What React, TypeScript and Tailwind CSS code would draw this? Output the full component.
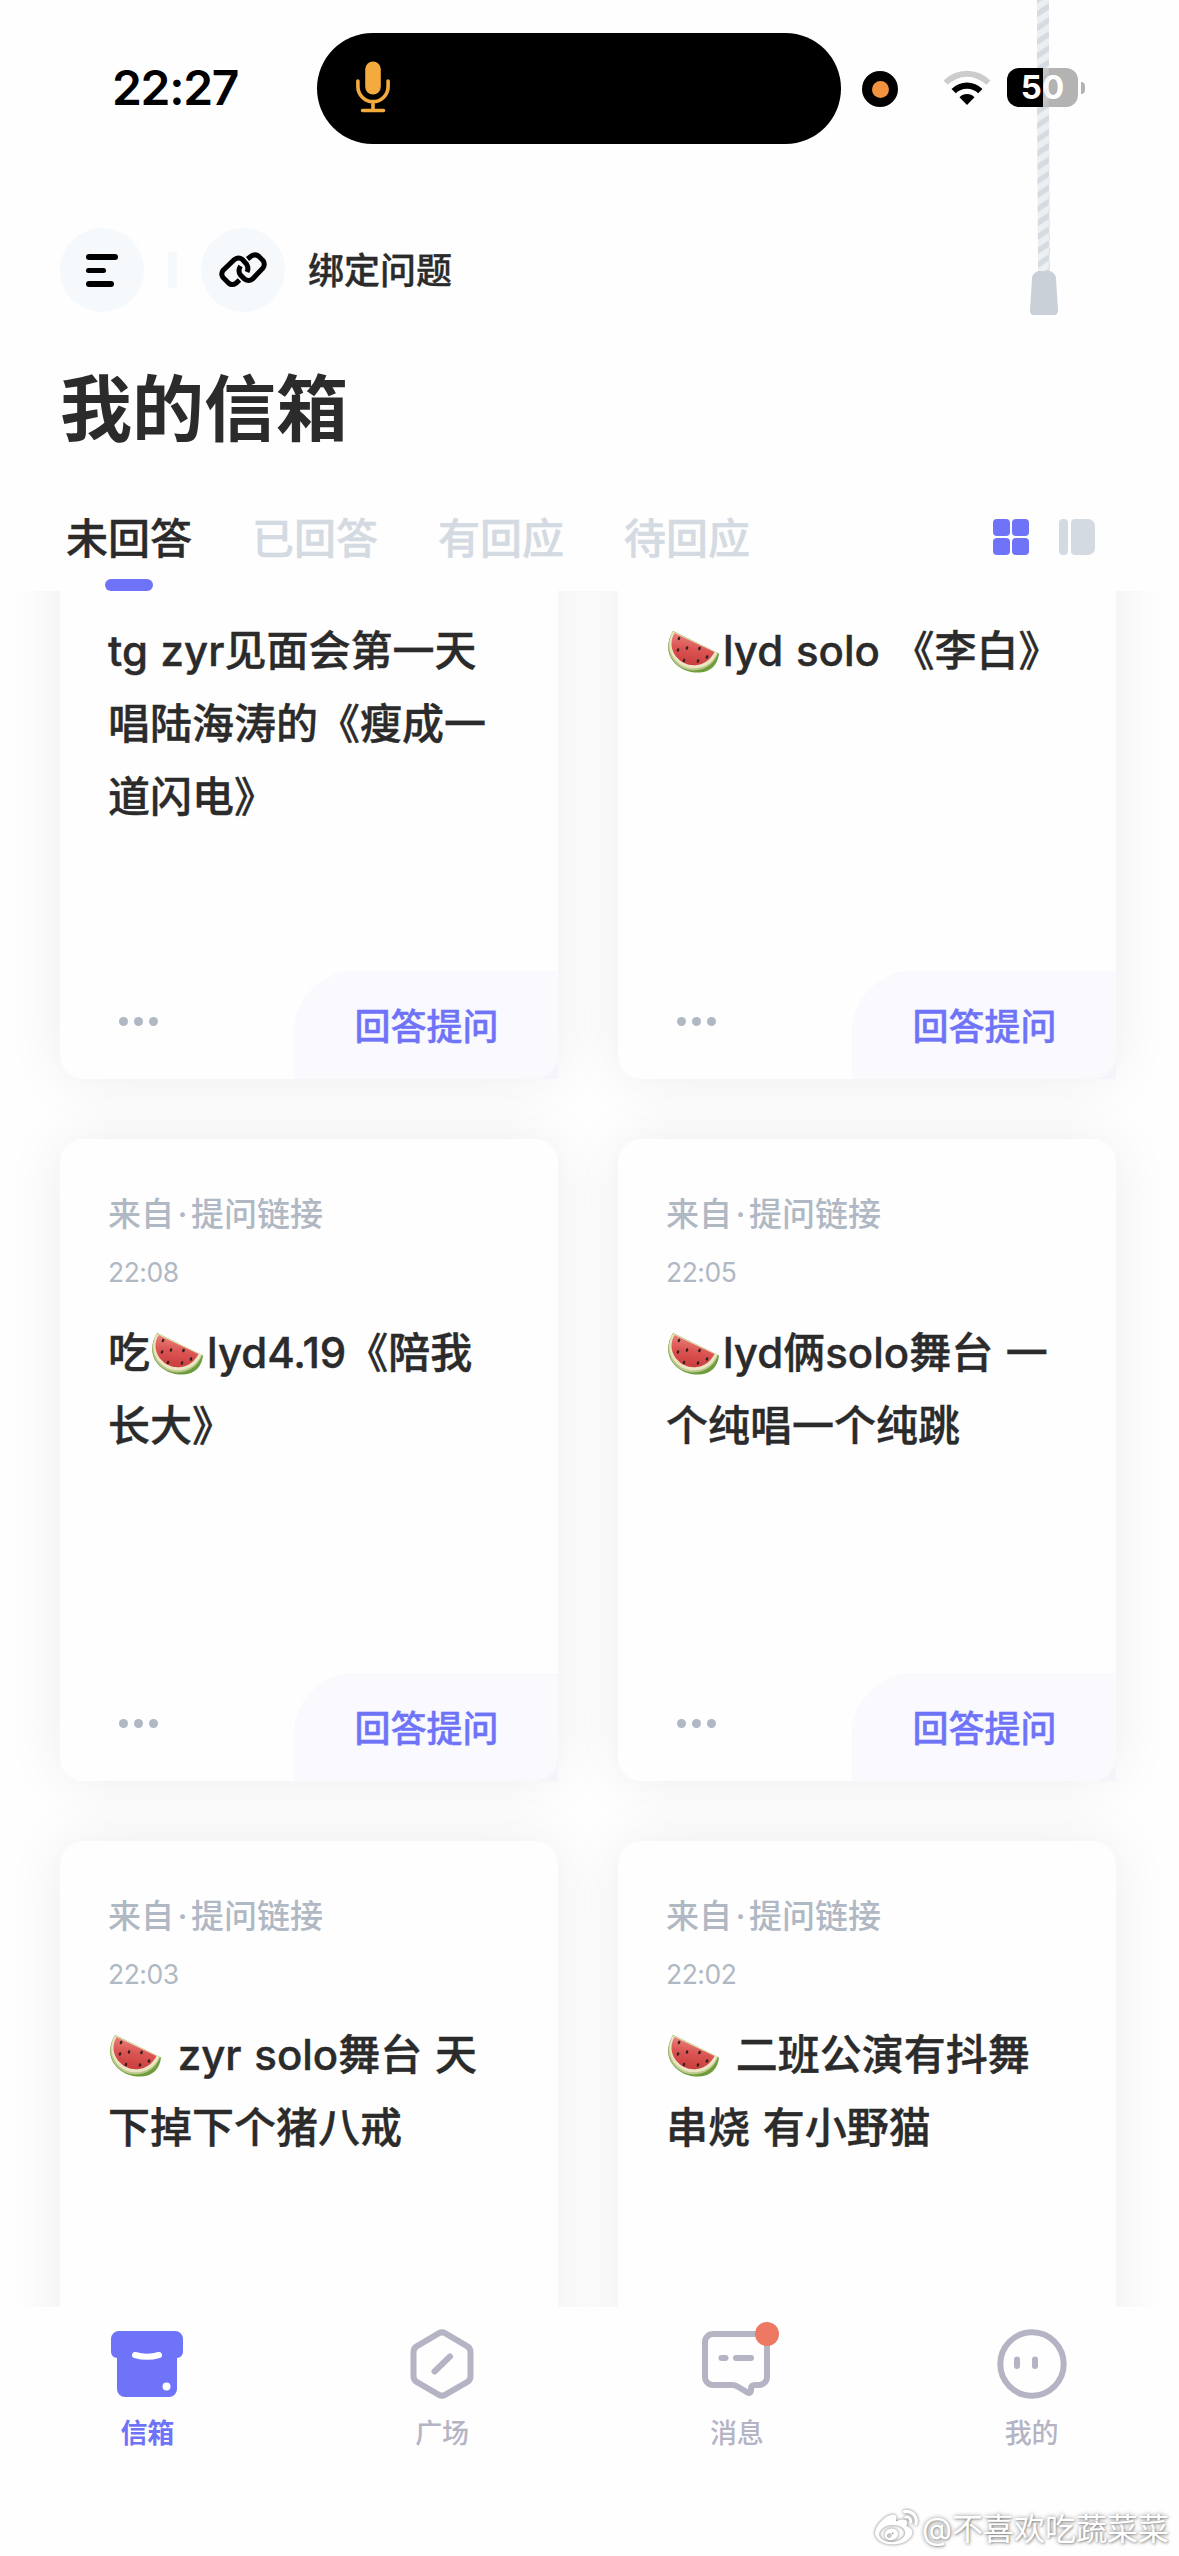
import React from "react";
import { FaWeibo } from "react-icons/fa";

function Watermelon() {
  return (
    <svg viewBox="0 0 51 42" className="mr-[4px] ml-[2px] inline-block h-[42px] w-[51px] align-[-7px]" aria-label="🍉">
      <defs>
        <linearGradient id="flesh" x1="0.6" y1="0" x2="0.4" y2="1">
          <stop offset="0" stopColor="#eb8a80" />
          <stop offset="0.5" stopColor="#db5553" />
          <stop offset="1" stopColor="#c93c3d" />
        </linearGradient>
      </defs>
      <path d="M5 0C-1 10-2 21 5 30c7 9 17 12 27 11.500C42 41 50 34 51 22.500z" fill="#6f9c3c" />
      <path d="M5 0C-1 10-1 20 5 29c7 9 16 11.500 25 10C40 37.500 47 31 50 22z" fill="#b9c98a" />
      <path d="M5 .5C0 10 0 19 6 27.500c6 8 15 11 24 9.500 9-1.500 16-7 19.500-15.500z" fill="#ece5c3" />
      <path d="M6.500 2C2 10 2.500 18 8 25.500c6 7 13 9.500 21 8.500 8-1 14-6 17.500-13z" fill="url(#flesh)" />
      <g fill="#33201f">
        <ellipse cx="11" cy="7.500" rx="1.200" ry="1.900" transform="rotate(20 11 7.500)" />
        <ellipse cx="10" cy="19" rx="1.200" ry="1.900" transform="rotate(20 10 19)" />
        <ellipse cx="19" cy="17" rx="1.200" ry="1.900" transform="rotate(20 19 17)" />
        <ellipse cx="31.500" cy="17.500" rx="1.300" ry="1.900" transform="rotate(20 31.500 17.500)" />
        <ellipse cx="16" cy="29.500" rx="1.200" ry="1.900" transform="rotate(20 16 29.500)" />
        <ellipse cx="30" cy="30" rx="1.200" ry="1.900" transform="rotate(20 30 30)" />
        <ellipse cx="39" cy="26" rx="1.300" ry="1.900" transform="rotate(20 39 26)" />
      </g>
    </svg>
  );
}

type Question = { time: string; scrolled?: boolean; lines: React.ReactNode[] };

const questions: Question[] = [
  { time: "22:10", scrolled: true, lines: ["tg zyr见面会第一天", "唱陆海涛的《瘦成一", "道闪电》"] },
  { time: "22:09", scrolled: true, lines: [<><Watermelon />lyd solo 《李白》</>] },
  { time: "22:08", lines: [<>吃<Watermelon />lyd4.19《陪我</>, "长大》"] },
  { time: "22:05", lines: [<><Watermelon />lyd俩solo舞台 一</>, "个纯唱一个纯跳"] },
  { time: "22:03", lines: [<><Watermelon /> zyr solo舞台 天</>, "下掉下个猪八戒"] },
  { time: "22:02", lines: [<><Watermelon /> 二班公演有抖舞</>, "串烧 有小野猫"] },
];

function Card({ q }: { q: Question }) {
  return (
    <article className="flex h-[642px] flex-col rounded-[24px] bg-[#fefefe] shadow-[0_0_60px_rgba(0,0,0,0.07)]">
      <div className="h-[177px] px-[48px] pt-[55px] text-[#b0b8c4]">
        {/* The meta lines of the first row are scrolled under the header. */}
        {!q.scrolled && (
          <>
            <div className="flex h-[40px] items-center text-[33px] leading-[40px] font-medium">
              来自<span className="w-[17px] text-center">·</span>提问链接
            </div>
            <div className="mt-[20px] flex h-[36px] items-center text-[26.5px] leading-[36px] tracking-[-0.5px]">{q.time}</div>
          </>
        )}
      </div>
      <div className="flex-1 px-[48px] text-[42px] leading-[73px] font-medium whitespace-pre text-[#2b2b2b] [word-spacing:1.5px] [-webkit-text-stroke:0.4px_#2b2b2b]">
        {q.lines.map((line, i) => (
          <div key={i} className="h-[73px]">{line}</div>
        ))}
      </div>
      <div className="flex h-[108px] items-center justify-between">
        <div className="flex gap-[6px] pb-[7px] pl-[59px]">
          <i className="size-[9px] rounded-full bg-[#b0b8c4]" />
          <i className="size-[9px] rounded-full bg-[#b0b8c4]" />
          <i className="size-[9px] rounded-full bg-[#b0b8c4]" />
        </div>
        <div className="h-full w-[264px] rounded-tl-[62px] bg-[#f4f4fa]">
          <div className="flex h-full items-center justify-center rounded-tl-[62px] rounded-br-[24px] bg-[#f9f9fe] pt-[3px] pl-[1px] text-[36px] font-medium text-[#6e73f8] [-webkit-text-stroke:0.4px_#6e73f8]">
            回答提问
          </div>
        </div>
      </div>
    </article>
  );
}

function StatusBar() {
  return (
    <div className="flex h-[177px] items-start">
      <div className="mt-[58px] ml-[112px] w-[205px] text-[48px] leading-[60px] font-semibold tracking-[-1.3px] text-black">22:27</div>
      <div className="mt-[33px] flex h-[111px] w-[524px] items-center rounded-full bg-black pl-[39px]">
        <svg viewBox="0 0 34 52" className="mb-[3px] h-[52px] w-[34px]" fill="none" stroke="#f3ab3e" strokeWidth="3.600" strokeLinecap="round">
          <rect x="9.200" y="0.500" width="15.600" height="33" rx="7.800" fill="#f3ab3e" stroke="none" />
          <path d="M1.900 20v5.500a15.100 15.100 0 0 0 30.200 0V20M17 41v8M6.500 49.500h21" />
        </svg>
      </div>
      <div className="mt-[71px] ml-[21px] flex size-[36px] items-center justify-center rounded-full bg-black">
        <div className="size-[17px] rounded-full bg-[#f0923f]" />
      </div>
      <svg viewBox="0 0 48 36" className="mt-[70px] ml-[45px] h-[36px] w-[48px]">
        <path d="M0.500 10.500A33 33 0 0 1 47.500 10.500L43.300 14.800A27.300 27.300 0 0 0 4.700 14.800Z" fill="#cccccc" />
        <path d="M8.500 19A22 22 0 0 1 39.500 19L35.200 23.300A16 16 0 0 0 12.800 23.300Z" fill="#000" />
        <path d="M16.500 27.200A10.600 10.600 0 0 1 31.500 27.200L24 35Z" fill="#000" />
      </svg>
      <div className="mt-[68px] ml-[16px] flex h-[39px] w-[71px] items-center justify-center overflow-hidden rounded-[12px] bg-[linear-gradient(90deg,#000_36px,#b3b3b3_36px)] text-[33px] leading-[39px] font-bold text-white">
        50
      </div>
      <div className="mt-[82px] ml-[3px] h-[12px] w-[4px] rounded-r-full bg-[#b3b3b3]" />
    </div>
  );
}

function PullCord() {
  return (
    <svg viewBox="0 0 40 320" className="absolute top-0 left-[1024px] h-[320px] w-[40px]">
      <defs>
        <pattern id="twist" width="12" height="13.950" patternUnits="userSpaceOnUse" x="13">
          <rect width="12" height="13.950" fill="#ebeff2" />
          <path d="M0 11L12 3V9.500L0 17.500ZM0 -2.950L12 -10.950V-4.450L0 3.550Z" fill="#d3dae0" />
        </pattern>
      </defs>
      <g opacity="0.95">
        <rect x="13" width="12" height="68" fill="url(#twist)" />
        <rect x="19" y="68" width="6" height="39" fill="url(#twist)" opacity="0.3" />
        <path d="M13 107h12l1 165h-12z" fill="url(#twist)" />
      </g>
      <path d="M14 271h12c4 2 6 4 6 8l2 31c0 3-1 5-4 5H10c-3 0-4-2-4-5l2-31c0-4 2-6 6-8z" fill="#c9d0d8" />
    </svg>
  );
}

function LinkIcon() {
  return (
    <svg viewBox="0 0 48 36" className="h-[36px] w-[48px] overflow-visible" fill="none" stroke="#000" strokeWidth="5">
      <path d="M20.500 28L17 31.200Q13 34 9.500 31L4 25.500Q1.500 22 4 18.500L15.500 7.500Q19.500 4.500 23.500 7.500L27.500 12Q30 16 28 20" />
      <path d="M28.500 7L32 4.200Q36.500 1.500 40 4.500L44 8.500Q46.500 12 44 16L33.500 27Q29.500 30 25.500 27L21.500 23Q18.500 19 21.500 14" />
    </svg>
  );
}

const tabs = ["未回答", "已回答", "有回应", "待回应"];

const navIcons = [
  {
    label: "信箱",
    active: true,
    icon: (
      <svg viewBox="0 0 74 72" className="h-[72px] w-[74px]">
        <path d="M9 3h56a8 8 0 0 1 8 8v13a6 6 0 0 1-6 6v31a8 8 0 0 1-8 8H15a8 8 0 0 1-8-8V30a6 6 0 0 1-6-6V11a8 8 0 0 1 8-8z" fill="#6e73f8" />
        <path d="M25 27q12 3.500 24 0" fill="none" stroke="#fff" strokeWidth="6" strokeLinecap="round" />
        <circle cx="56.500" cy="58.500" r="4" fill="#fff" />
      </svg>
    ),
  },
  {
    label: "广场",
    icon: (
      <svg viewBox="0 0 74 72" className="h-[72px] w-[74px]" fill="none" stroke="#b4b4c4" strokeWidth="6" strokeLinecap="round">
        <path d="M34 5.200q3-1.700 6 0l22 13q3.500 2 3.500 6v24q0 4-3.500 6l-22 12.600q-3 1.700-6 0L12 54.200q-3.500-2-3.500-6v-24q0-4 3.500-6z" />
        <path d="M29.500 43.500L45 28.500" />
      </svg>
    ),
  },
  {
    label: "消息",
    badge: true,
    icon: (
      <svg viewBox="0 0 74 72" className="h-[72px] w-[74px]" fill="none" stroke="#b4b4c4" strokeWidth="6" strokeLinecap="round" strokeLinejoin="round">
        <path d="M13 6h46a8 8 0 0 1 8 8v35a8 8 0 0 1-8 8h-4q-4 0-4 4v1.500q-.5 3.500-3.500 2l-10-6q-2.500-1.500-5.500-1.500H13a8 8 0 0 1-8-8V14a8 8 0 0 1 8-8z" />
        <path d="M21.500 30h4M36 30h15" />
      </svg>
    ),
  },
  {
    label: "我的",
    icon: (
      <svg viewBox="0 0 74 72" className="h-[72px] w-[74px]" fill="none" stroke="#b4b4c4" strokeWidth="6" strokeLinecap="round">
        <circle cx="37" cy="36" r="31.700" />
        <path d="M22 31.500v6.500M40 31.500v6.500" />
      </svg>
    ),
  },
];

export default function App() {
  return (
    <div className="relative flex h-[2556px] w-[1179px] flex-col overflow-hidden bg-[#fefefe] font-[Inter,'Noto_Sans_CJK_SC',sans-serif] text-[#2b2b2b]">
      <StatusBar />
      <header className="flex h-[414px] flex-col pt-[51px] pl-[60px]">
        <div className="flex h-[84px] items-center">
          <div className="flex size-[84px] flex-col justify-center gap-[8px] rounded-full bg-[#f5f9fc] pl-[26px]">
            <i className="h-[6px] w-[32px] rounded-full bg-black" />
            <i className="h-[5px] w-[20px] rounded-full bg-black" />
            <i className="h-[6px] w-[28px] rounded-full bg-black" />
          </div>
          <div className="mx-[24px] h-[36px] w-[9px] bg-[#f5f9fc]" />
          <div className="flex size-[84px] items-center justify-center rounded-full bg-[#f5f9fc]">
            <LinkIcon />
          </div>
          <span className="ml-[23px] pt-[2px] text-[36px] font-medium [-webkit-text-stroke:0.4px_#2b2b2b]">绑定问题</span>
        </div>
        <h1 className="mt-[53px] h-[88px] text-[72px] leading-[88px] font-semibold">我的信箱</h1>
        <div className="mt-[54px] flex items-start pl-[6px]">
          <div className="flex gap-[60px]">
            {tabs.map((t, i) => (
              <div
                key={t}
                className={
                  i === 0
                    ? "flex flex-col items-center pt-[2px] text-[42px] leading-[60px] font-medium [-webkit-text-stroke:0.4px_#2b2b2b]"
                    : "flex flex-col items-center pt-[2px] text-[42px] leading-[60px] font-medium text-[#d4dae2] [-webkit-text-stroke:0.4px_#d4dae2]"
                }
              >
                {t}
                {i === 0 && <div className="mt-[10px] h-[12px] w-[48px] rounded-[6px] bg-[#6e73f8]" />}
              </div>
            ))}
          </div>
          <div className="mt-[12px] ml-[243px] grid grid-cols-2 gap-[2px]">
            <i className="size-[17px] rounded-[4px] bg-[#6e73f8]" />
            <i className="size-[17px] rounded-[4px] bg-[#6e73f8]" />
            <i className="size-[17px] rounded-[4px] bg-[#6e73f8]" />
            <i className="size-[17px] rounded-[4px] bg-[#6e73f8]" />
          </div>
          <div className="mt-[12px] ml-[30px] flex h-[36px] gap-[3px]">
            <i className="w-[9px] rounded-[4px] bg-[#d4dae2]" />
            <i className="w-[24px] rounded-[4px] rounded-r-[7px] bg-[#d4dae2]" />
          </div>
        </div>
      </header>
      <main className="h-[1716px] overflow-hidden">
        <div className="-mt-[154px] grid grid-cols-[498px_498px] gap-[60px] pl-[60px]">
          {questions.map((q) => (
            <Card key={q.time} q={q} />
          ))}
        </div>
      </main>
      <nav className="grid flex-1 grid-cols-4 bg-[#fefefe] pt-[21px]">
        {navIcons.map((n) => (
          <div key={n.label} className="flex flex-col items-center">
            <div className="relative">
              {n.icon}
              {n.badge && <div className="absolute -top-[6px] left-[55px] size-[24px] rounded-full bg-[#ee7963]" />}
            </div>
            <span className={n.active ? "mt-[16px] text-[27px] leading-[36px] font-semibold text-[#6e73f8]" : "mt-[16px] text-[27px] leading-[36px] font-medium text-[#b4b4c4]"}>{n.label}</span>
          </div>
        ))}
      </nav>
      <div className="absolute right-[10px] bottom-[6px] flex items-center gap-[4px] text-[31px] leading-[40px] text-white [text-shadow:0_0_4px_rgba(0,0,0,0.45),1px_1px_2px_rgba(0,0,0,0.25)]">
        <FaWeibo className="size-[43px] [filter:drop-shadow(0_0_1.5px_rgba(0,0,0,0.55))]" />
        <span>@不喜欢吃蔬菜菜</span>
      </div>
      <PullCord />
    </div>
  );
}
